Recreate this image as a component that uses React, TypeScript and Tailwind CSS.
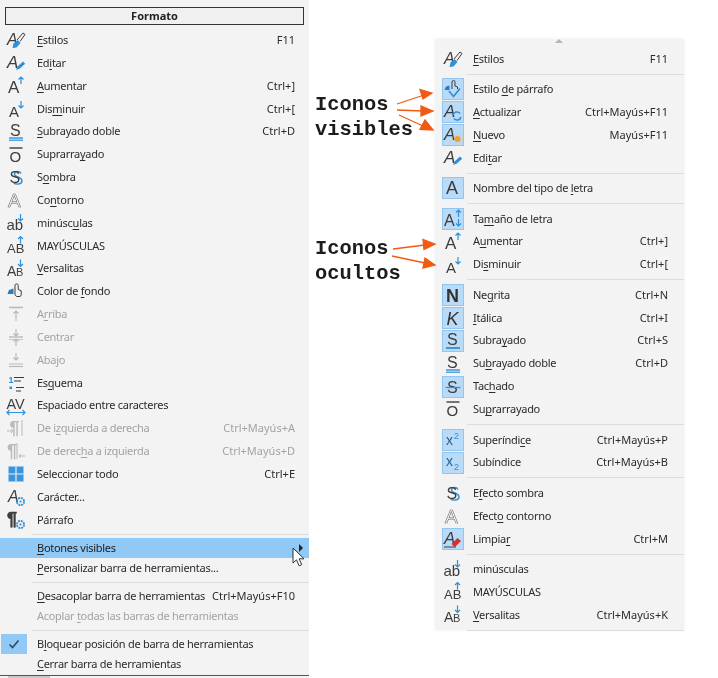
import type { ReactNode } from "react";

const INK = "#3d3d3d";
const BLUE = "#2f8fd8";
const GRAY = "#b9b9b9";

// helpers for the small toolbar glyphs
function Svg({ children }: { children: ReactNode }) {
  return (
    <svg viewBox="0 0 20 20" className="h-5 w-5 overflow-visible font-['Liberation_Sans']">
      {children}
    </svg>
  );
}

function Ch(props: { x: number; y: number; s: number; t: string; c?: string; bold?: boolean; italic?: boolean; stroke?: string }) {
  return (
    <text
      x={props.x}
      y={props.y}
      fontSize={props.s}
      fill={props.c ?? INK}
      fontWeight={props.bold ? 700 : 400}
      fontStyle={props.italic ? "italic" : "normal"}
      stroke={props.stroke}
      strokeWidth={props.stroke ? 0.6 : undefined}
    >
      {props.t}
    </text>
  );
}

const Up = ({ x = 15, y = 1, c = BLUE }: { x?: number; y?: number; c?: string }) => (
  <path d={`M${x} ${y + 7}V${y}M${x - 2.5} ${y + 2.5}L${x} ${y}L${x + 2.5} ${y + 2.5}`} fill="none" stroke={c} strokeWidth="1.2" />
);
const Down = ({ x = 15, y = 1, c = BLUE }: { x?: number; y?: number; c?: string }) => (
  <path d={`M${x} ${y}V${y + 7}M${x - 2.5} ${y + 4.5}L${x} ${y + 7}L${x + 2.5} ${y + 4.5}`} fill="none" stroke={c} strokeWidth="1.2" />
);
const Gear = () => (
  <>
    <circle cx="14.5" cy="14.5" r="3.6" fill="none" stroke={BLUE} strokeWidth="1.8" strokeDasharray="2 0.8" />
    <circle cx="14.5" cy="14.5" r="1.1" fill={BLUE} />
  </>
);
const Hand = () => (
  <>
    <path d="M1.5 12L3 8 7.5 6.5V12z" fill="#2a7cc0" />
    <path d="M9 12V3.5a1.6 1.6 0 0 1 3.2 0V7.5l3 1.2V13l-1 1.5H10.5L8.5 12" fill="none" stroke={INK} strokeWidth="1" />
  </>
);

const icons: Record<string, ReactNode> = {
  styles: (
    <Svg>
      <Ch x={1} y={15} s={16} t="A" italic />
      <path d="M11 10L17 3l2 1.5-5 7" fill="none" stroke={INK} strokeWidth="1" />
      <path d="M6.5 18l1-4.5 4-3.5 3 3-4 4.5z" fill={BLUE} />
    </Svg>
  ),
  edit: (
    <Svg>
      <Ch x={1} y={15} s={17} t="A" italic />
      <path d="M10 17l1.5-3.5L17 8.5l2.2 2.2-5.7 5z" fill={BLUE} />
    </Svg>
  ),
  grow: (
    <Svg>
      <Ch x={2} y={17} s={17} t="A" />
      <Up x={15} y={1} />
    </Svg>
  ),
  shrink: (
    <Svg>
      <Ch x={3} y={17.5} s={15} t="A" />
      <Down x={15} y={2} />
    </Svg>
  ),
  dbl: (
    <Svg>
      <Ch x={4} y={14} s={16} t="S" />
      <path d="M3 16h14" stroke={BLUE} strokeWidth="1.4" />
      <path d="M3 18.2h14" stroke={BLUE} strokeWidth="1.2" />
    </Svg>
  ),
  under: (
    <Svg>
      <Ch x={4} y={14} s={16} t="S" />
      <path d="M3 17h14" stroke={BLUE} strokeWidth="1.8" />
    </Svg>
  ),
  strike: (
    <Svg>
      <Ch x={4} y={16} s={16} t="S" />
      <path d="M2.5 10.5h15" stroke={BLUE} strokeWidth="1.3" />
    </Svg>
  ),
  over: (
    <Svg>
      <path d="M3.5 3h13" stroke={INK} strokeWidth="1.4" />
      <Ch x={3.5} y={17} s={15} t="O" />
    </Svg>
  ),
  shadow: (
    <Svg>
      <path d="M15 6.5c-1-2.5-6.5-3-6.5.5 0 3.5 7.5 2.5 7.5 7 0 3.5-6.5 4-8.5 1.5" fill="none" stroke={BLUE} strokeWidth="1.4" />
      <Ch x={3.5} y={15.5} s={16} t="S" />
    </Svg>
  ),
  outline: (
    <Svg>
      <Ch x={2} y={17} s={19} t="A" c="#fafafa" stroke="#6a6a6a" />
    </Svg>
  ),
  lower: (
    <Svg>
      <Ch x={0.5} y={17} s={15} t="ab" />
      <Down x={14.5} y={1} />
    </Svg>
  ),
  upper: (
    <Svg>
      <Ch x={1} y={17} s={13} t="AB" />
      <Up x={14.5} y={0.5} />
    </Svg>
  ),
  small: (
    <Svg>
      <Ch x={1} y={17} s={14} t="A" />
      <Ch x={10} y={17} s={11} t="B" />
      <Down x={14.5} y={0.5} />
    </Svg>
  ),
  fill: (
    <Svg>
      <Hand />
    </Svg>
  ),
  top: (
    <Svg>
      <path d="M3 3.5h14" stroke={GRAY} strokeWidth="1.6" />
      <Up x={10} y={7} c={GRAY} />
      <path d="M10 14v3" stroke={GRAY} />
    </Svg>
  ),
  mid: (
    <Svg>
      <path d="M3 10h14" stroke={GRAY} strokeWidth="1.4" />
      <path d="M3 12.5h14" stroke={GRAY} strokeWidth="0.8" />
      <Down x={10} y={2} c={GRAY} />
      <Up x={10} y={12} c={GRAY} />
    </Svg>
  ),
  bottom: (
    <Svg>
      <Down x={10} y={3} c={GRAY} />
      <path d="M3 14h14" stroke={GRAY} strokeWidth="1" />
      <path d="M3 16.5h14" stroke={GRAY} strokeWidth="1.2" />
    </Svg>
  ),
  list: (
    <Svg>
      <Ch x={2.5} y={10} s={9} t="1" c={BLUE} bold />
      <path d="M8 4.5h10M8 8h7M10 14.5h8M10 18h5" stroke={INK} strokeWidth="1.1" />
      <rect x="3.5" y="13.5" width="2.5" height="2.5" fill={BLUE} />
    </Svg>
  ),
  spacing: (
    <Svg>
      <Ch x={0.5} y={13} s={14.5} t="AV" />
      <path d="M1 16.5h18M3.5 14l-2.5 2.5 2.5 2.5M16.5 14l2.5 2.5-2.5 2.5" fill="none" stroke={BLUE} strokeWidth="1.2" />
    </Svg>
  ),
  ltr: (
    <Svg>
      <Ch x={3.5} y={16} s={18} t="¶" c={GRAY} bold />
      <path d="M1 13h6M5 11l2 2-2 2" fill="none" stroke={GRAY} />
      <path d="M16 2v16" stroke={GRAY} />
    </Svg>
  ),
  rtl: (
    <Svg>
      <Ch x={1} y={16} s={18} t="¶" c={GRAY} bold />
      <path d="M13 15h6M15 13l-2 2 2 2" fill="none" stroke={GRAY} />
      <path d="M11 2v16" stroke={GRAY} />
    </Svg>
  ),
  table: (
    <svg viewBox="0 0 20 20" className="h-5 w-5">
      <path d="M2.5 2.5h15v15h-15z" fill="#3a95dc" />
      <path d="M10 2.5v15M2.5 10h15" stroke="#e4f1fb" strokeWidth="1.2" />
    </svg>
  ),
  chr: (
    <Svg>
      <Ch x={2} y={15} s={16} t="A" italic />
      <Gear />
    </Svg>
  ),
  para: (
    <Svg>
      <Ch x={1} y={15} s={18} t="¶" bold stroke={INK} />
      <Gear />
    </Svg>
  ),
  paraStyle: (
    <Svg>
      <path d="M1.5 11L3 7.5 6.5 6.5V11z" fill="#2a7cc0" />
      <path d="M9 10V3a1.5 1.5 0 0 1 3 0V7l2.5 1v2" fill="none" stroke={INK} strokeWidth="1" />
      <path d="M6 12l4.5 5.5 6.5-8" fill="none" stroke={BLUE} strokeWidth="1.7" />
    </Svg>
  ),
  update: (
    <Svg>
      <Ch x={1} y={15} s={17} t="A" italic />
      <path d="M10 13a4 4 0 0 1 7-1.5M18 15a4 4 0 0 1-7 1.5" fill="none" stroke={BLUE} strokeWidth="1.6" />
    </Svg>
  ),
  fresh: (
    <Svg>
      <Ch x={1} y={15} s={17} t="A" italic />
      <circle cx="14.5" cy="14" r="3" fill="#f0a030" />
      <circle cx="14.5" cy="14" r="5" fill="none" stroke="#f6c67a" strokeWidth="1" strokeDasharray="1.5 1.5" />
    </Svg>
  ),
  font: (
    <Svg>
      <Ch x={3} y={16} s={18} t="A" />
    </Svg>
  ),
  size: (
    <Svg>
      <Ch x={1} y={17} s={16} t="A" />
      <Up x={15.5} y={1} />
      <Down x={15.5} y={10} />
    </Svg>
  ),
  bold: (
    <Svg>
      <Ch x={3} y={16.5} s={18} t="N" bold c="#333" />
    </Svg>
  ),
  italic: (
    <Svg>
      <Ch x={3.5} y={16.5} s={18} t="K" italic c="#333" />
    </Svg>
  ),
  sup: (
    <Svg>
      <Ch x={3} y={15} s={14} t="x" c="#2a5f8c" />
      <Ch x={11} y={9} s={9} t="2" c={BLUE} />
    </Svg>
  ),
  sub: (
    <Svg>
      <Ch x={3} y={13} s={14} t="x" c="#2a5f8c" />
      <Ch x={11} y={17} s={9} t="2" c={BLUE} />
    </Svg>
  ),
  clear: (
    <Svg>
      <Ch x={1} y={15} s={17} t="A" italic />
      <path d="M8.5 15l6-6 3.5 3-5.5 5.5H11z" fill="#d8302c" />
      <path d="M1 18h12" stroke={INK} />
    </Svg>
  ),
};

// "_x" marks the accelerator letter
function Label({ text }: { text: string }) {
  const i = text.indexOf("_");
  if (i < 0) return <span className="whitespace-nowrap tracking-[-0.28px]">{text}</span>;
  return (
    <span className="whitespace-nowrap tracking-[-0.28px]">
      {text.slice(0, i)}
      <u className="underline-offset-2">{text[i + 1]}</u>
      {text.slice(i + 2)}
    </span>
  );
}

type Item = { icon?: string; label: string; keys?: string; off?: boolean; on?: boolean };

function LeftRow({ icon, label, keys, off }: Item) {
  return (
    <div className={`flex h-[22.83px] items-center pr-[14px] ${off ? "text-[#a3a3a3]" : "text-[#2b2b2b]"}`}>
      <div className="flex w-[37px] shrink-0 justify-center pr-[5px]">{icon && icons[icon]}</div>
      <Label text={label} />
      {keys && <span className="ml-auto whitespace-nowrap">{keys}</span>}
    </div>
  );
}

function PlainRow({ label, keys, off }: Item) {
  return (
    <div className={`flex h-5 items-center pl-[37px] pr-[14px] ${off ? "text-[#a3a3a3]" : "text-[#2b2b2b]"}`}>
      <Label text={label} />
      {keys && <span className="ml-auto whitespace-nowrap">{keys}</span>}
    </div>
  );
}

function RightRow({ icon, label, keys, on }: Item) {
  return (
    <div className="flex h-[22.9px] items-center pl-2 pr-4 text-[#2b2b2b]">
      <div
        className={`mr-[10px] flex h-5 w-5 shrink-0 items-center justify-center ${on ? "bg-[#b9dbf7] outline outline-1 outline-[#93c6ee]" : ""}`}
      >
        {icon && icons[icon]}
      </div>
      <Label text={label} />
      {keys && <span className="ml-auto whitespace-nowrap">{keys}</span>}
    </div>
  );
}

function Sep({ h = "h-[7.5px]" }: { h?: string }) {
  return (
    <div className={`flex ${h} items-center`}>
      <div className="ml-8 h-px w-full bg-[#dcdcdc]" />
    </div>
  );
}

const leftItems: Item[] = [
  { icon: "styles", label: "_Estilos", keys: "F11" },
  { icon: "edit", label: "Ed_itar" },
  { icon: "grow", label: "_Aumentar", keys: "Ctrl+]" },
  { icon: "shrink", label: "Dis_minuir", keys: "Ctrl+[" },
  { icon: "dbl", label: "_Subrayado doble", keys: "Ctrl+D" },
  { icon: "over", label: "Suprarra_yado" },
  { icon: "shadow", label: "S_ombra" },
  { icon: "outline", label: "Co_ntorno" },
  { icon: "lower", label: "minúsc_ulas" },
  { icon: "upper", label: "MAYÚSCULAS" },
  { icon: "small", label: "_Versalitas" },
  { icon: "fill", label: "Color de _fondo" },
  { icon: "top", label: "A_rriba", off: true },
  { icon: "mid", label: "Centrar", off: true },
  { icon: "bottom", label: "Aba_jo", off: true },
  { icon: "list", label: "Es_quema" },
  { icon: "spacing", label: "Espaciado entre caracteres" },
  { icon: "ltr", label: "De i_zquierda a derecha", keys: "Ctrl+Mayús+A", off: true },
  { icon: "rtl", label: "De derec_ha a izquierda", keys: "Ctrl+Mayús+D", off: true },
  { icon: "table", label: "Seleccionar todo", keys: "Ctrl+E" },
  { icon: "chr", label: "Carácter..." },
  { icon: "para", label: "Párrafo" },
];

const rightGroups: Item[][] = [
  [{ icon: "styles", label: "_Estilos", keys: "F11" }],
  [
    { icon: "paraStyle", label: "Estilo _de párrafo", on: true },
    { icon: "update", label: "_Actualizar", keys: "Ctrl+Mayús+F11", on: true },
    { icon: "fresh", label: "_Nuevo", keys: "Mayús+F11", on: true },
    { icon: "edit", label: "Edi_tar" },
  ],
  [{ icon: "font", label: "Nombre del tipo de _letra", on: true }],
  [
    { icon: "size", label: "Ta_maño de letra", on: true },
    { icon: "grow", label: "A_umentar", keys: "Ctrl+]" },
    { icon: "shrink", label: "Di_sminuir", keys: "Ctrl+[" },
  ],
  [
    { icon: "bold", label: "Ne_grita", keys: "Ctrl+N", on: true },
    { icon: "italic", label: "_Itálica", keys: "Ctrl+I", on: true },
    { icon: "under", label: "Subra_yado", keys: "Ctrl+S", on: true },
    { icon: "dbl", label: "Su_brayado doble", keys: "Ctrl+D" },
    { icon: "strike", label: "Tac_hado", on: true },
    { icon: "over", label: "Su_prarrayado" },
  ],
  [
    { icon: "sup", label: "Superíndi_ce", keys: "Ctrl+Mayús+P", on: true },
    { icon: "sub", label: "Subíndice", keys: "Ctrl+Mayús+B", on: true },
  ],
  [
    { icon: "shadow", label: "E_fecto sombra" },
    { icon: "outline", label: "Efect_o contorno" },
    { icon: "clear", label: "Limpia_r", keys: "Ctrl+M", on: true },
  ],
  [
    { icon: "lower", label: "minúsculas" },
    { icon: "upper", label: "MAYÚSCULAS" },
    { icon: "small", label: "_Versalitas", keys: "Ctrl+Mayús+K" },
  ],
];

export default function App() {
  return (
    <div className="relative flex h-[678px] w-[718px] items-start overflow-hidden bg-white font-['Noto_Sans','Open_Sans',sans-serif] text-[11px] blur-[0.4px]">
      {/* menú de la barra de herramientas */}
      <div className="relative h-[678px] w-[309px] shrink-0 bg-[#f3f3f3] pt-[7px]">
        <div className="mx-[5px] mb-[4.4px] flex h-[17.6px] items-center justify-center border border-[#333] bg-[#f0f0f0] font-bold text-[#222]">
          Formato
        </div>
        {leftItems.map((it) => (
          <LeftRow key={it.label} {...it} />
        ))}
        <Sep h="h-[7.1px]" />
        <div className="relative flex h-5 items-center bg-[#90c8f6] pl-[37px] text-[#222]">
          <Label text="_Botones visibles" />
          <span className="absolute right-[6px] top-[6px] h-0 w-0 border-y-[4px] border-l-[4px] border-y-transparent border-l-[#222]" />
        </div>
        <PlainRow label="_Personalizar barra de herramientas..." />
        <Sep h="h-[8px]" />
        <PlainRow label="_Desacoplar barra de herramientas" keys="Ctrl+Mayús+F10" />
        <PlainRow label="Acoplar _todas las barras de herramientas" off />
        <Sep h="h-[8px]" />
        <div className="relative">
          <span className="absolute left-[1px] top-0 flex h-5 w-[26px] items-center justify-center bg-[#90c8f6]">
            <svg viewBox="0 0 14 14" className="h-[14px] w-[14px]">
              <path d="M2.5 7.5l3 3 6-7" fill="none" stroke="#2d4a66" strokeWidth="1.6" />
            </svg>
          </span>
          <PlainRow label="B_loquear posición de barra de herramientas" />
        </div>
        <PlainRow label="_Cerrar barra de herramientas" />
        <div className="mt-[1px] flex h-[3px] border-t border-[#555]">
          <div className="ml-[8px] h-full w-[42px] bg-[#c8c8c8]" />
        </div>
        {/* puntero */}
        <svg viewBox="0 0 14 21" className="absolute left-[292px] top-[547px] h-[21px] w-[14px]">
          <path d="M1 1v15l3.5-3.2 2.6 6 2.6-1.1-2.6-5.9H12z" fill="#fff" stroke="#333" strokeWidth="1" />
        </svg>
      </div>

      {/* rótulos */}
      <div className="w-[126px] shrink-0 pl-[6px] pt-[93px] font-['Liberation_Mono',monospace] text-[20.4px] font-bold leading-[24.5px] text-[#1c1c1c]">
        <div>Iconos</div>
        <div>visibles</div>
        <div className="mt-[95px]">Iconos</div>
        <div>ocultos</div>
      </div>

      {/* submenú */}
      <div className="relative mt-[39px] h-[591px] w-[249px] shrink-0 bg-[#f3f3f3] pt-[8.5px] shadow-[0_0_3px_rgba(0,0,0,0.08)]">
        <span className="absolute left-[120px] top-0 h-0 w-0 border-x-[4px] border-b-[4px] border-x-transparent border-b-[#b5b5b5]" />
        {rightGroups.map((group, g) => (
          <div key={g}>
            {group.map((it) => (
              <RightRow key={it.label} {...it} />
            ))}
            <Sep />
          </div>
        ))}
      </div>

      {/* flechas */}
      <svg viewBox="0 0 718 678" className="pointer-events-none absolute inset-0 h-[678px] w-[718px]">
        <g stroke="#f15a13" strokeWidth="1.3" fill="#f15a13">
          <path d="M397 104L424 95" />
          <path d="M432 93L420 89.5 423 99z" />
          <path d="M397 110L423 111" />
          <path d="M433 111L421 106 421 116z" />
          <path d="M399 115L423 126" />
          <path d="M433 130L425 120 420 129.5z" />
          <path d="M393 249L425 245" />
          <path d="M435 244L423 239.5 424 249.5z" />
          <path d="M392 256L425 263" />
          <path d="M435 265L425 258 423 268z" />
        </g>
      </svg>
    </div>
  );
}
